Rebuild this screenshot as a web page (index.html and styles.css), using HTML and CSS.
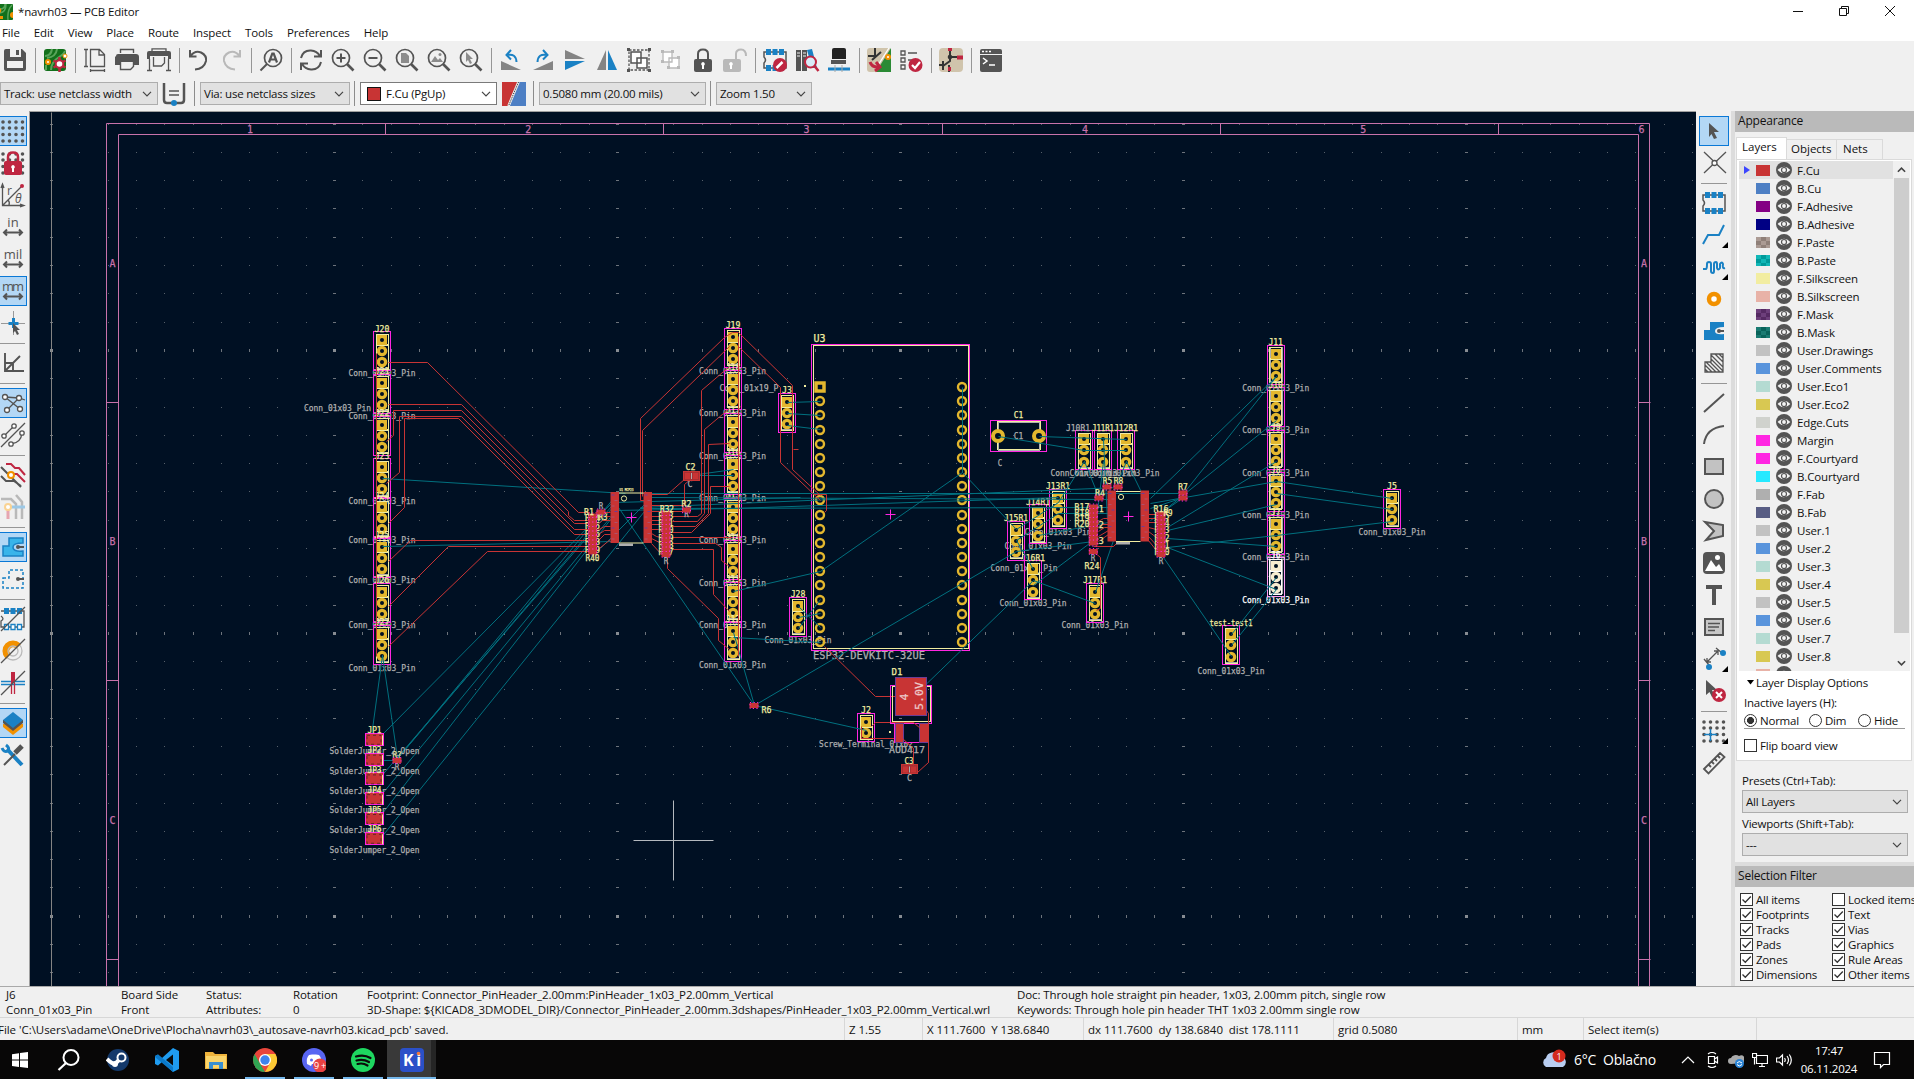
FILE: index.html
```html
<!DOCTYPE html>
<html lang="en">
<head>
<meta charset="utf-8">
<title>*navrh03 — PCB Editor</title>
<link rel="stylesheet" href="styles.css">
</head>
<body>
<svg class="sprite" aria-hidden="true">
  <symbol id="eye" viewBox="0 0 16 16"><circle cx="8" cy="8" r="8" fill="#545454"/><path d="M1.600 8Q8 1.600 14.400 8Q8 14.400 1.600 8Z" fill="#f4f4f4"/><circle cx="8" cy="8" r="2.500" fill="#f4f4f4" stroke="#545454" stroke-width="1.200"/></symbol>
  <symbol id="down" viewBox="0 0 10 6"><path d="M1 .8L5 4.800L9 .8" fill="none" stroke="#444" stroke-width="1.200"/></symbol>
  <symbol id="lens" viewBox="0 0 24 24"><circle cx="10" cy="10" r="8.500" fill="none" stroke="#545454" stroke-width="1.700"/><path d="M16 16L22.500 22.500" stroke="#545454" stroke-width="2.600"/></symbol>
  <symbol id="chip" viewBox="0 0 24 24"><path d="M1 4H23V20H1V15Q4 12 1 9Z" fill="none" stroke="#545454" stroke-width="1.500"/><path d="M3 1h5v6H3zM9.500 1h5v6h-5zM16 1h5v6h-5zM3 17h5v6H3zM9.500 17h5v6h-5zM16 17h5v6h-5z" fill="#1a81c4" stroke="none"/></symbol>
  <symbol id="check" viewBox="0 0 13 13"><path d="M2.500 6.500L5.300 9.300L10.800 3.500" fill="none" stroke="#333" stroke-width="1.300"/></symbol>
</svg>

<header class="titlebar">
  <svg class="app-icon" viewBox="0 0 16 16"><rect x="-4" width="17" height="16" rx="1" fill="#12701b"/><path d="M0 5Q5 5 5 0M6 0Q6 8 0 9M12 1Q7 6 8 16" stroke="#58a55a" stroke-width="1.500" fill="none"/><path d="M0 4a3 3 0 010 5M0 12h3v3H0M13 8a3 3 0 000 6" fill="#f29100"/></svg>
  <span class="title">*navrh03 — PCB Editor</span>
  <div class="win-controls">
    <svg viewBox="0 0 12 12"><path d="M1 6.500H11"/></svg>
    <svg viewBox="0 0 12 12"><path d="M1.500 3.500h7v7h-7zM3.500 3.500v-2h7v7h-2"/></svg>
    <svg viewBox="0 0 12 12"><path d="M1 1L11 11M11 1L1 11"/></svg>
  </div>
</header>
<nav class="menubar"><span>File</span><span>Edit</span><span>View</span><span>Place</span><span>Route</span><span>Inspect</span><span>Tools</span><span>Preferences</span><span>Help</span></nav>

<div class="toolbar main">
  <b class="tb"><svg class="ic" viewBox="0 0 24 24"><path class="f" d="M1 3Q1 1 3 1H19L23 5V21Q23 23 21 23H3Q1 23 1 21Z"/><path fill="#f0f0f0" stroke="none" d="M7 1h11v8H7zM4 13h16v7H4z"/><path class="f" d="M13 2h3v5h-3z"/></svg></b><i class="sep"></i>
  <b class="tb"><svg class="ic" viewBox="0 0 24 24"><rect x="1" y="1" width="22" height="22" rx="3" fill="#12701b" stroke="none"/><path d="M2 8Q8 8 9 1M4 10Q13 9 14 1M8 22Q8 14 16 9Q21 6 22 3M3 22v-5" stroke="#58a55a"/><circle cx="5" cy="14" r="2" fill="#fff" stroke="#f29100"/><circle cx="22" cy="8" r="2" fill="#fff" stroke="#f29100" stroke-width="1"/><path d="M16.500 9v15M10.500 12.500l12 7M10.500 19.500l12-7" stroke="#bf2641" stroke-width="2.500"/><circle cx="16.500" cy="16" r="3.800" fill="#fff" stroke="#bf2641"/></svg></b><i class="sep"></i>
  <b class="tb"><svg class="ic thin" viewBox="0 0 24 24"><path d="M7.500 1.500h9l5 5v12h-14zM16 2v5h5M1 1.500h4M1 18.500h4M3 2v16M7.500 21v3M21.500 21v3M8 22.500h13"/></svg></b>
  <b class="tb"><svg class="ic" viewBox="0 0 24 24"><path class="f" d="M1 8Q1 6 3 6H21Q24 6 24 9V17H19V14H5V17H0V9Z"/><path d="M5.500 5V1.500h13V5M5.500 14v7.500h10l3-3V14" fill="none" stroke-width="1.400"/></svg></b>
  <b class="tb"><svg class="ic" viewBox="0 0 24 24"><path class="f" d="M0 5Q0 3 2 3H22Q24 3 24 5V11H21V8H3V11H0Z"/><path d="M5 3V.8h14V3M6.500 9v9h8l3-3V9M2.500 11v11M21.500 11v11M0 22.500h5M19 22.500h5" stroke-width="1.300"/></svg></b><i class="sep"></i>
  <b class="tb"><svg class="ic" viewBox="0 0 24 24"><path d="M3 2V8.500H9.500M3.500 8Q8 2 14 4.500Q20 7.500 19 13Q17 21 8 21.500"/></svg></b>
  <b class="tb"><svg class="ic pale" viewBox="0 0 24 24"><path d="M21 2V8.500H14.500M20.500 8Q16 2 10 4.500Q4 7.500 5 13Q7 21 16 21.500"/></svg></b><i class="sep"></i>
  <b class="tb"><svg class="ic" viewBox="0 0 24 24"><circle cx="14" cy="10" r="8.500" stroke-width="1.700"/><path d="M8 16L1.500 22.500"/><path d="M10 14.500L13.300 5.500H14.700L18 14.500M11 11.500h6" stroke-width="2.200"/></svg></b><i class="sep"></i>
  <b class="tb"><svg class="ic" viewBox="0 0 24 24"><path d="M2 10Q4 2 12 2.500Q18 3 21 8M22 2v6.500h-7M22 14Q20 22 12 21.500Q6 21 3 16M2 22v-6.500h7"/></svg></b>
  <b class="tb"><svg class="ic" viewBox="0 0 24 24"><use href="#lens"/><path d="M5.500 10h9M10 5.500v9"/></svg></b>
  <b class="tb"><svg class="ic" viewBox="0 0 24 24"><use href="#lens"/><path d="M5.500 10h9"/></svg></b>
  <b class="tb"><svg class="ic" viewBox="0 0 24 24"><use href="#lens"/><path fill="#8c8c8c" stroke="none" d="M6 5h5l3 3v7H6z"/></svg></b>
  <b class="tb"><svg class="ic" viewBox="0 0 24 24"><use href="#lens"/><path fill="#8c8c8c" stroke="none" d="M4 14l4-6 3 4 2-2 3 4z"/><circle cx="13" cy="6.500" r="1.500" fill="#8c8c8c" stroke="none"/></svg></b>
  <b class="tb"><svg class="ic" viewBox="0 0 24 24"><use href="#lens"/><path fill="#8c8c8c" stroke="none" d="M7 4l7 7h-3l2 4-2 1-2-4-2 2z"/></svg></b><i class="sep"></i>
  <b class="tb"><svg class="ic" viewBox="0 0 24 24"><path fill="#848484" stroke="none" d="M2 13V22H22Z"/><path class="b" d="M8 7Q17 5 17.500 14M12 2L7.500 7L12 11.500"/></svg></b>
  <b class="tb"><svg class="ic" viewBox="0 0 24 24"><path fill="#848484" stroke="none" d="M22 13V22H2Z"/><path class="b" d="M16 7Q7 5 6.500 14M12 2L16.500 7L12 11.500"/></svg></b>
  <b class="tb"><svg class="ic" viewBox="0 0 24 24"><path fill="#848484" stroke="none" d="M2 2V11H22Z"/><path fill="#1a81c4" stroke="none" d="M2 22V13H22Z"/></svg></b>
  <b class="tb"><svg class="ic" viewBox="0 0 24 24"><path fill="#848484" stroke="none" d="M2 22H11V2Z"/><path fill="#1a81c4" stroke="none" d="M22 22H13V2Z"/></svg></b>
  <b class="tb"><svg class="ic thin" viewBox="0 0 24 24"><path d="M2 2H22V22H2Z" stroke-dasharray="2.500 1.500"/><path class="f" d="M0 0h3v3H0zM21 0h3v3h-3zM0 21h3v3H0zM21 21h3v3h-3z"/><path fill="#fff" d="M4 4H14V15H4ZM10 10H20V20H10Z" stroke-width="1.500"/></svg></b>
  <b class="tb"><svg class="ic thin pale" viewBox="0 0 24 24"><path fill="#fff" d="M4 4H13V14H4ZM10 10H20V20H10Z"/><path fill="#b9b9b9" stroke="none" d="M2 2h3v3H2zM12 2h3v3h-3zM2 12h3v3H2zM18 8h3v3h-3zM18 18h3v3h-3zM8 18h3v3H8z"/></svg></b>
  <b class="tb"><svg class="ic" viewBox="0 0 24 24"><rect class="f" x="3" y="11" width="18" height="13" rx="2"/><path d="M7 12V6Q7 1.500 12 1.500Q17 1.500 17 6V12"/><path fill="#fff" stroke="none" d="M12 14a2 2 0 011 3.600V21h-2v-3.400A2 2 0 0112 14"/></svg></b>
  <b class="tb"><svg class="ic pale" viewBox="0 0 24 24"><rect x="0" y="11" width="18" height="13" rx="2" fill="#b9b9b9" stroke="none"/><path d="M13 12V6Q13 1.500 18 1.500Q23 1.500 23 8"/><path fill="#fff" stroke="none" d="M8 14a2 2 0 011 3.600V21H7v-3.400A2 2 0 018 14"/></svg></b><i class="sep"></i>
  <b class="tb"><svg class="ic" viewBox="0 0 24 24"><use href="#chip"/><circle cx="17" cy="17" r="7" fill="#bf2641" stroke="none"/><path d="M13.500 20l6-6" stroke="#fff" stroke-width="2.500"/></svg></b>
  <b class="tb"><svg class="ic" viewBox="0 0 24 24"><path class="f" d="M1 2h5v21H1zM7 2h5v21H7z"/><path fill="#1a81c4" stroke="none" d="M12 2l5-1 5 19h-5z"/><path d="M2 5h3M2 8h3M8 5h3M8 8h3" stroke="#f0f0f0" stroke-width="1"/><circle cx="15.500" cy="14" r="5.500" fill="#d8ecf8" stroke="#bf2641"/><path d="M19.500 18l4 5" stroke="#bf2641" stroke-width="2.500"/></svg></b>
  <b class="tb"><svg class="ic" viewBox="0 0 24 24"><path fill="#222" stroke="none" d="M5 2Q5 0 7 0H17Q19 0 19 2V11H5Z"/><path class="f" d="M4 12h15v4H4z"/><path class="b" d="M1 21H23" stroke-width="3"/><path d="M8 17v7M15 17v7" stroke="#aaa" stroke-width="1"/></svg></b><i class="sep"></i>
  <b class="tb"><svg class="ic" viewBox="0 0 24 24"><rect width="24" height="24" rx="3" fill="#d0c4ac" stroke="none"/><path d="M24 0L9 24H24Z" fill="#2a8a34" stroke="none"/><path d="M1 8H9M8 0V10M5 12L14 4" stroke="#333"/><path d="M22 0L8 22" stroke="#fff" stroke-width="1.300"/><path d="M3 14Q5 20 13 19M9 14l4 5-5 4" stroke="#bf2641" stroke-width="3"/><circle cx="21" cy="9" r="2" fill="#fff" stroke="#f29100"/></svg></b>
  <b class="tb"><svg class="ic thin" viewBox="0 0 24 24"><path d="M2 3h4v4H2zM2 10h4v4H2zM2 17h4v4H2zM9 5h9M9 12h5"/><circle cx="16.500" cy="17" r="7" fill="#bf2641" stroke="none"/><path d="M13 17l3 3 5-6" stroke="#fff" stroke-width="2.200"/></svg></b><i class="sep"></i>
  <b class="tb"><svg class="ic" viewBox="0 0 24 24"><rect width="24" height="24" rx="4" fill="#d0c4ac" stroke="none"/><path d="M11 2V9H20M11 9V13L4 18M4 13V22M0 17H4M10 17V24" stroke="#333"/><circle cx="11" cy="9" r="2.300" fill="#333" stroke="none"/><path d="M11 0V3M18 9.500H24M9 21h3" stroke="#bf2641" stroke-width="4"/></svg></b><i class="sep"></i>
  <b class="tb"><svg class="ic" viewBox="0 0 24 24"><rect class="f" x="1" y="1" width="22" height="23" rx="2"/><path d="M1 6.500H23" stroke="#f0f0f0" stroke-width="1"/><path d="M3 3.500h2M6.500 3.500h2M10 3.500h2M4 10l4 3-4 3M10 17h6" stroke="#fff" stroke-width="1.500"/></svg></b>
</div>

<div class="toolbar options">
  <div class="combo w-track"><span>Track: use netclass width</span><svg class="dn"><use href="#down"/></svg></div>
  <b class="opt-icon"><svg class="ic" viewBox="0 0 24 24"><path d="M2 1V18Q2 21 5 21H19Q22 21 22 18V1" stroke-width="2.500"/><path d="M7 9h10M7 13h10" stroke-width="1.300"/><circle cx="12" cy="21" r="3" fill="#1a81c4" stroke="none"/></svg></b>
  <i class="vsep"></i>
  <div class="combo w-via"><span>Via: use netclass sizes</span><svg class="dn"><use href="#down"/></svg></div>
  <i class="vsep"></i>
  <div class="combo w-layer"><em class="sw"></em><span>F.Cu (PgUp)</span><svg class="dn"><use href="#down"/></svg></div>
  <svg class="pair" viewBox="0 0 24 24"><path d="M0 0H16L6 24H0Z" fill="#c83434"/><path d="M17 0H24V24H7Z" fill="#4d7fc4"/><path d="M16.500 0L6.500 24" stroke="#f0f0f0" stroke-width="2.600"/><path d="M16.500 0L6.500 24" stroke="#222" stroke-dasharray="1 1"/></svg>
  <i class="vsep"></i>
  <div class="combo w-grid"><span>0.5080 mm (20.00 mils)</span><svg class="dn"><use href="#down"/></svg></div>
  <i class="vsep"></i>
  <div class="combo w-zoom"><span>Zoom 1.50</span><svg class="dn"><use href="#down"/></svg></div>
</div>

<main class="workspace">
  <aside class="tools left">
    <b class="vb on"><svg class="ic" viewBox="0 0 24 24"><path class="dots" d="M2 3H24M2 9H24M2 15.500H24M2 22H24"/></svg></b>
    <b class="vb"><svg class="ic" viewBox="0 0 24 24"><path class="dots" d="M2 3H24M2 9H24M2 15.500H24M2 22H24"/><rect x="3" y="10" width="18" height="14" rx="2" fill="#bf2641" stroke="none"/><path d="M7 11V6Q7 1.500 12 1.500Q17 1.500 17 6V11" stroke="#bf2641" stroke-width="2.500"/><path fill="#fff" stroke="none" d="M12 14a2 2 0 011 3.600V21h-2v-3.400A2 2 0 0112 14"/></svg></b>
    <b class="vb"><svg class="ic thin" viewBox="0 0 24 24"><path d="M1.500 2V22.500H22M0 5l1.500-4L3 5M19 21l4 1.500L19 24M2 22L20 4M7 17q2 2 1 5"/><circle cx="21" cy="3" r="2" fill="#bf2641" stroke="none"/><text x="6" y="12" font-size="12">r</text><text x="14" y="20" font-size="12" font-style="italic">θ</text></svg></b>
    <b class="vb"><svg class="ic" viewBox="0 0 24 24"><text x="12" y="12" font-size="13" text-anchor="middle">in</text><path d="M3 17.500H21M6 14.500L3 17.500L6 20.500M18 14.500L21 17.500L18 20.500"/></svg></b>
    <b class="vb"><svg class="ic" viewBox="0 0 24 24"><text x="12" y="12" font-size="13" text-anchor="middle">mil</text><path d="M3 17.500H21M6 14.500L3 17.500L6 20.500M18 14.500L21 17.500L18 20.500"/></svg></b>
    <b class="vb on"><svg class="ic" viewBox="0 0 24 24"><text x="12" y="12" font-size="13" text-anchor="middle" textLength="22">mm</text><path d="M3 17.500H21M6 14.500L3 17.500L6 20.500M18 14.500L21 17.500L18 20.500"/></svg></b>
    <b class="vb"><svg class="ic" viewBox="0 0 24 24"><path d="M12.500 0V24M0 12.500H24" stroke="#999" stroke-width="1"/><path class="b" d="M12.500 7V17M7.500 12.500h10" stroke-width="3"/><path class="f" d="M12 12l7 7h-3l2 4-2 1-2-4-2 2z"/></svg></b>
    <i class="hsep"></i>
    <b class="vb"><svg class="ic" viewBox="0 0 24 24"><path d="M4 2V20H23M4 20L19 5M4 12h8v8" stroke-width="1.900"/></svg></b>
    <i class="hsep"></i>
    <b class="vb on"><svg class="ic thin" viewBox="0 0 24 24"><path d="M4 6L18 7L24 9M4 6L19 18M18 7L6 19"/><g fill="#fff"><circle cx="4" cy="6" r="2.500"/><circle cx="18" cy="7" r="2.500"/><circle cx="19" cy="18" r="2.500"/><circle cx="6" cy="19" r="2.500"/></g></svg></b>
    <b class="vb"><svg class="ic thin" viewBox="0 0 24 24"><path d="M0 24L24 0M3 13L13 3M10 21Q20 20 21 10"/><g fill="#fff"><circle cx="3" cy="13" r="2.200"/><circle cx="13" cy="3" r="2.200"/><circle cx="10" cy="21" r="2.200"/><circle cx="21" cy="10" r="2.200"/></g></svg></b>
    <i class="hsep"></i>
    <b class="vb"><svg class="ic" viewBox="0 0 24 24"><path d="M0 4L9 13L13 17L20 24M0 13L5 18H13L20 23"/><path d="M5 1H10L14 5H18L24 12M10 11H16L24 19" stroke="#bf2641"/><circle cx="10" cy="12" r="3" fill="#fff" stroke="#f29100"/></svg></b>
    <b class="vb"><svg class="ic pale" viewBox="0 0 24 24"><path d="M0 4H10L15 9V24M15 0L21 7V24" stroke-width="2.500"/><path d="M5 12H24" stroke="#9cc8e6" stroke-width="3"/><path d="M7 14V24" stroke="#e6a5b0" stroke-width="3"/><circle cx="7" cy="12" r="3" fill="#fff" stroke="#fad393"/></svg></b>
    <i class="hsep"></i>
    <b class="vb on"><svg class="ic" viewBox="0 0 24 24"><path d="M2 11H8V3H22V8Q12 8 12 12Q12 17 22 16V21H2Z" fill="#39b4ea" stroke="#1a81c4" stroke-width="1.500"/><circle cx="17" cy="12" r="2" class="f"/><path d="M17 12h6"/></svg></b>
    <b class="vb"><svg class="ic" viewBox="0 0 24 24"><path class="b" d="M2 11H8V3H22V21H2Z" stroke-width="1.500" stroke-dasharray="3 2"/><circle cx="17" cy="12" r="2" class="f"/><path d="M17 12h6"/></svg></b>
    <i class="hsep"></i>
    <b class="vb"><svg class="ic thin" viewBox="0 0 24 24"><path d="M0 4H23V20H0V14Q4 12 0 9"/><path d="M3 1h5v6H3zM9.500 1h5v6h-5zM16 1h5v6h-5z" fill="#1a81c4" stroke="none"/><path class="b" fill="#fff" d="M3.500 17.500h4v5h-4zM10 17.500h4v5h-4zM16.500 17.500h4v5h-4z"/><path d="M0 24L24 0"/></svg></b>
    <b class="vb"><svg class="ic thin" viewBox="0 0 24 24"><circle cx="12" cy="12" r="9" stroke="#bbb"/><path d="M5 19A9.500 9.500 0 0119 5L15 9A4 4 0 009 15Z" fill="#f29100" stroke="#f29100"/><circle cx="12" cy="12" r="5" stroke="#bbb"/><path d="M0 24L24 0"/></svg></b>
    <b class="vb"><svg class="ic thin" viewBox="0 0 24 24"><path class="b" d="M0 10.500H24M12 13.500H24M0 13.500h12"/><path d="M10.500 12V23M13.500 12V23" stroke="#bf2641"/><path d="M12 1V12" stroke="#bf2641" stroke-width="4"/><path d="M0 24L24 0"/></svg></b>
    <i class="hsep"></i>
    <b class="vb on"><svg class="ic" viewBox="0 0 24 24"><path d="M2 16L12 24L22 16V13H2Z" fill="#f29100" stroke="none"/><path class="f" d="M2 12L12 20L22 12V9H2Z"/><path d="M2 9L12 1L22 9L12 17Z" fill="#1a81c4" stroke="none"/></svg></b>
    <b class="vb"><svg class="ic" viewBox="0 0 24 24"><path class="b" d="M6 6L21 22" stroke-width="4"/><path class="b" d="M1 5Q3 10 7 8Q9 5 5 2" stroke-width="3"/><path d="M3 22L14 11" stroke-width="2"/><path d="M14 10L21 3" stroke-width="5"/></svg></b>
  </aside>

  <svg id="board" class="board" viewBox="30 112 1666 874" width="1666" height="874"></svg>

  <aside class="tools right">
    <b class="vb on"><svg class="ic" viewBox="0 0 24 24"><path class="f" d="M7 4l10 9h-5l3 6-3 1-2.500-5-2.500 3z"/></svg></b>
    <b class="vb"><svg class="ic thin" viewBox="0 0 24 24"><path d="M2 1L24 22M24 1L2 22"/><circle cx="12.500" cy="12" r="2.500" fill="#fff"/></svg></b>
    <i class="hsep"></i>
    <b class="vb"><svg class="ic" viewBox="0 0 24 24"><use href="#chip"/></svg></b>
    <b class="vb more"><svg class="ic" viewBox="0 0 24 24"><path class="b" d="M1 21L6 12H17L22 2"/></svg></b>
    <b class="vb more"><svg class="ic" viewBox="0 0 24 24"><path class="b" d="M1 14H4Q5 14 5 9Q5 7 7 7Q9 7 9 9V16Q9 18 11 18Q12 18 12 16V9Q12 7 14 7Q15 7 15 9V13Q16 16 18 13V9Q20 6 21 9Q20 14 23 13"/></svg></b>
    <b class="vb"><svg class="ic" viewBox="0 0 24 24"><circle cx="12" cy="12" r="5" fill="#fff" stroke="#f29100" stroke-width="4.500"/></svg></b>
    <b class="vb"><svg class="ic" viewBox="0 0 24 24"><path d="M2 11H8V3H22V8Q13 8 13 12Q13 16 22 15V21H2Z" fill="#1a81c4" stroke="none"/><circle cx="17" cy="12" r="2" class="f"/><path d="M17 12h5"/></svg></b>
    <b class="vb"><svg class="ic thin" viewBox="0 0 24 24"><path d="M3 11H9V3H21V21H3ZM9 4L21 16M13 3L21 11M17 3L21 7M9 8L21 20M8 11L18 21M4 11L14 21M3 14L10 21M3 18L6 21"/></svg></b>
    <i class="hsep"></i>
    <b class="vb"><svg class="ic" viewBox="0 0 24 24"><path d="M2 21L22 3"/></svg></b>
    <b class="vb"><svg class="ic" viewBox="0 0 24 24"><path d="M2 21Q4 5 22 3"/></svg></b>
    <b class="vb"><svg class="ic" viewBox="0 0 24 24"><rect x="3" y="4" width="18" height="15" fill="#c2c2c2"/></svg></b>
    <b class="vb"><svg class="ic" viewBox="0 0 24 24"><circle cx="12" cy="12" r="9" fill="#c2c2c2"/></svg></b>
    <b class="vb"><svg class="ic" viewBox="0 0 24 24"><path d="M3 3L21 6V17L4 21L12 12Z" fill="#c2c2c2"/></svg></b>
    <b class="vb"><svg class="ic" viewBox="0 0 24 24"><rect class="f" x="1" y="1" width="22" height="22" rx="4"/><path fill="#fff" stroke="none" d="M3 20L9 9L14 16L17 13L21 20Z"/><circle cx="15.500" cy="6.500" r="2.500" fill="#fff" stroke="none"/></svg></b>
    <b class="vb"><svg class="ic" viewBox="0 0 24 24"><path d="M4 4H20M12 4V22" stroke-width="4"/></svg></b>
    <b class="vb"><svg class="ic" viewBox="0 0 24 24"><rect x="3" y="4" width="18" height="16" fill="#c8c8c8"/><path d="M6 8.500H18M6 12H17M6 15.500H13" stroke-width="1.300"/></svg></b>
    <b class="vb more"><svg class="ic thin" viewBox="0 0 24 24"><path d="M5 15L16 4M5 11v4h4M12 4h4v4M2 12L7 18M14 1L20 6"/><g fill="#1a81c4" stroke="none"><circle cx="21" cy="6" r="3"/><circle cx="7" cy="20" r="3"/></g></svg></b>
    <b class="vb"><svg class="ic" viewBox="0 0 24 24"><path class="f" d="M4 1l11 10h-5l3 6-3 1-2.500-5-3.500 3z"/><circle cx="17" cy="16" r="7" fill="#bf2641" stroke="none"/><path d="M14 13l6 6M20 13l-6 6" stroke="#fff"/></svg></b>
    <i class="hsep"></i>
    <b class="vb more"><svg class="ic" viewBox="0 0 24 24"><path class="dots" d="M2 3H24M2 9H24M2 15.500H24M2 22H24"/><path class="b" d="M8.500 10V22M2 15.500H15" stroke-width="1.500"/></svg></b>
    <b class="vb"><svg class="ic" viewBox="0 0 24 24"><path d="M2 18L18 2L22.500 6L6.500 22.500ZM7 14l2 2M10 11l2 2M13 8l2 2M16 5l2 2" stroke-width="1.800"/></svg></b>
  </aside>

  <section class="panel">
    <h2>Appearance</h2>
    <div class="tabs"><span class="tab active">Layers</span><span class="tab">Objects</span><span class="tab">Nets</span></div>
    <div class="page">
      <div class="list-wrap">
        <ul class="layers" id="layers"></ul>
        <div class="scroll"><svg viewBox="0 0 10 6"><path d="M1 5L5 1L9 5"/></svg><span class="thumb"></span><svg viewBox="0 0 10 6"><path d="M1 1L5 5L9 1"/></svg></div>
      </div>
      <div class="display">
        <div class="disc"><svg viewBox="0 0 7 5"><path d="M0 0H7L3.500 4.500Z"/></svg>Layer Display Options</div>
        <div class="inactive">Inactive layers (H):</div>
        <div class="radios"><label class="r1"><i class="radio sel"></i>Normal</label><label class="r2"><i class="radio"></i>Dim</label><label><i class="radio"></i>Hide</label></div>
        <label class="flip"><i class="cb"></i>Flip board view</label>
      </div>
    </div>
    <div class="presets">
      <p>Presets (Ctrl+Tab):</p>
      <div class="combo"><span>All Layers</span><svg class="dn"><use href="#down"/></svg></div>
      <p>Viewports (Shift+Tab):</p>
      <div class="combo"><span>---</span><svg class="dn"><use href="#down"/></svg></div>
    </div>
    <h2 class="filter-head">Selection Filter</h2>
    <div class="filter">
      <label><i class="cb"><svg><use href="#check"/></svg></i>All items</label><label><i class="cb"></i>Locked items</label>
      <label><i class="cb"><svg><use href="#check"/></svg></i>Footprints</label><label><i class="cb"><svg><use href="#check"/></svg></i>Text</label>
      <label><i class="cb"><svg><use href="#check"/></svg></i>Tracks</label><label><i class="cb"><svg><use href="#check"/></svg></i>Vias</label>
      <label><i class="cb"><svg><use href="#check"/></svg></i>Pads</label><label><i class="cb"><svg><use href="#check"/></svg></i>Graphics</label>
      <label><i class="cb"><svg><use href="#check"/></svg></i>Zones</label><label><i class="cb"><svg><use href="#check"/></svg></i>Rule Areas</label>
      <label><i class="cb"><svg><use href="#check"/></svg></i>Dimensions</label><label><i class="cb"><svg><use href="#check"/></svg></i>Other items</label>
    </div>
  </section>
</main>

<div class="messages">
  <div>J6<br>Conn_01x03_Pin</div><div>Board Side<br>Front</div><div>Status:<br>Attributes:</div><div>Rotation<br>0</div>
  <div>Footprint: Connector_PinHeader_2.00mm:PinHeader_1x03_P2.00mm_Vertical<br>3D-Shape: ${KICAD8_3DMODEL_DIR}/Connector_PinHeader_2.00mm.3dshapes/PinHeader_1x03_P2.00mm_Vertical.wrl</div>
  <div>Doc: Through hole straight pin header, 1x03, 2.00mm pitch, single row<br>Keywords: Through hole pin header THT 1x03 2.00mm single row</div>
</div>
<footer class="status"><span class="file">File 'C:\Users\adame\OneDrive\Plocha\navrh03\_autosave-navrh03.kicad_pcb' saved.</span><span>Z 1.55</span><span>X 111.7600&nbsp; Y 138.6840</span><span>dx 111.7600&nbsp; dy 138.6840&nbsp; dist 178.1111</span><span>grid 0.5080</span><span>mm</span><span>Select item(s)</span><span></span></footer>

<div class="taskbar">
  <div class="apps">
    <b><svg viewBox="0 0 24 24"><path fill="#fff" d="M4 6.200L11 5.200V11.500H4ZM12 5L20 4V11.500H12ZM4 12.500H11V19L4 18ZM12 12.500H20V20L12 19.100Z"/></svg></b>
    <b><svg viewBox="0 0 24 24"><circle cx="14" cy="9.500" r="7.500" fill="none" stroke="#fff" stroke-width="2"/><path d="M9 15L1.500 22" stroke="#fff" stroke-width="2.200"/></svg></b>
    <b><svg viewBox="0 0 24 24"><circle cx="12" cy="12" r="11" fill="#14396b"/><path d="M1 11Q6 16 9 16L15 10" stroke="#fff" stroke-width="4" fill="none"/><circle cx="15.500" cy="9.500" r="4" fill="#14396b" stroke="#fff" stroke-width="2"/><circle cx="9" cy="16" r="3" fill="#fff"/></svg></b>
    <b><svg viewBox="0 0 24 24"><path d="M18 0L24 3V21L18 24L7 14L3 17.500L0 16V8L3 6.500L7 10Z" fill="#1f9cf0"/><path d="M18 6.500V17.500L11 12Z" fill="#0b0b0b"/><path d="M0 8L3 6.500L18 19V24L0 9Z" fill="#0b79c9"/></svg></b>
    <b><svg viewBox="0 0 24 24"><path d="M1 4H9L11 6H23V21H1Z" fill="#f0b43c"/><path d="M2 8H22V20H2Z" fill="#fbd56b"/><path d="M5 21V14H19V21H15V17H9V21Z" fill="#3a8fd0"/></svg></b>
    <b class="run"><svg viewBox="0 0 24 24"><circle cx="12" cy="12" r="12" fill="#e9453a"/><path d="M1.600 6L7 15.500L12 24A12 12 0 010 12Q0 9 1.600 6" fill="#30a552"/><path d="M12 24A12 12 0 0022.400 6H12L17 15Z" fill="#fcc934"/><circle cx="12" cy="12" r="6" fill="#fff"/><circle cx="12" cy="12" r="4.700" fill="#3f83ee"/></svg></b>
    <b class="run"><svg viewBox="0 0 24 24"><circle cx="12" cy="12" r="12" fill="#5865f2"/><path fill="#fff" d="M5 16Q4 10 7 7L10 6.500H14L17 7Q20 10 19 16L15 18L14 16H10L9 18Z"/><circle cx="9.500" cy="12" r="1.500" fill="#5865f2"/><circle cx="18" cy="17.500" r="7" fill="#e84142"/><text x="12" y="21" font-size="9" fill="#fff" textLength="12">9+</text></svg></b>
    <b class="run"><svg viewBox="0 0 24 24"><circle cx="12" cy="12" r="12" fill="#1ed760"/><path d="M5 8.500Q13 6 19.500 10M5.500 12.500Q12 10.500 18 14M6.500 16Q12 14.500 16.500 17.500" fill="none" stroke="#0b0b0b" stroke-width="2.200" stroke-linecap="round"/></svg></b>
    <b class="run cur"><svg viewBox="0 0 24 24"><rect width="24" height="24" rx="4" fill="#2b50c8"/><text x="3" y="18" font-size="16" font-weight="700" fill="#fff" textLength="18">Ki</text><circle cx="18.500" cy="5.500" r="1.800" fill="#f27a3a"/></svg></b>
  </div>
  <div class="weather"><svg viewBox="0 0 26 22"><path d="M5 18a5 5 0 010-9 7 7 0 0113-2 6 6 0 014 11z" fill="#b9cdf0"/><circle cx="18" cy="7" r="6.500" fill="#d42a1e"/><text x="18" y="10.500" font-size="9" fill="#fff" text-anchor="middle">1</text></svg><span>6°C&nbsp; Oblačno</span></div>
  <div class="tray">
    <svg viewBox="0 0 16 16"><path d="M2 11L8 5L14 11"/></svg>
    <svg viewBox="0 0 16 16"><path d="M4.500 4.500h6v7h-6zM10.500 7l3-2v6l-3-2M4 2Q8-1 12 2M4 14Q8 17 12 14"/></svg>
    <svg viewBox="0 0 16 16"><path d="M3 12a3 3 0 010-6 5 4 0 018-2 4 4 0 014 7z" fill="#aaa" stroke="none"/><circle cx="11.500" cy="11.500" r="4.500" fill="#2a84d6" stroke="none"/><path d="M9 11q2-3 5 0M9 12.500q2 3 5 0" stroke-width="1"/></svg>
    <svg viewBox="0 0 16 16"><path d="M4.500 3.500h11v8h-11zM10 11.500v3M7 14.500h6M.5 1.500h4v4h-4zM2.500 5.500v7"/></svg>
    <svg viewBox="0 0 16 16"><path d="M.5 6h3l3-3v10l-3-3h-3zM8.500 6q1.500 2 0 4M11 4q3 4 0 8M13.300 2.500q4 5.500 0 11"/></svg>
  </div>
  <div class="clock">17:47<br>06.11.2024</div>
  <svg class="note" viewBox="0 0 18 18"><path d="M1.500 1.500h15v12h-6l-3 3v-3h-6z" fill="none" stroke="#fff" stroke-width="1.200"/></svg>
</div>
<script src="script.js"></script>
</body>
</html>
```
FILE: styles.css
```css
* { box-sizing: border-box; }
body { margin: 0; width: 1914px; height: 1079px; overflow: hidden; display: flex; flex-direction: column; background: #f0f0f0; color: #111; font: 11.500px/15px "Open Sans", "Noto Sans", sans-serif; letter-spacing: -0.22px; }
.sprite { display: none; }
b, i, em { font-style: normal; font-weight: 400; }
svg { display: block; flex: none; }
h2, p, ul { margin: 0; padding: 0; font-size: inherit; font-weight: 400; list-style: none; }

.titlebar { height: 24px; background: #fff; display: flex; align-items: center; }
.app-icon { width: 16px; height: 16px; margin-top: -1px; }
.title { padding: 0 0 1px 2px; letter-spacing: -.17px; }
.win-controls { margin-left: auto; display: flex; gap: 34px; padding: 0 18px 3px 0; }
.win-controls svg { width: 12px; height: 12px; fill: none; stroke: #111; }
.menubar { height: 17px; background: #fff; display: flex; gap: 14px; padding-left: 2px; align-items: center; letter-spacing: -.12px; }

.toolbar { display: flex; align-items: center; flex: none; }
.main { height: 38px; margin-left: -1px; }
.tb { width: 32px; display: flex; justify-content: center; }
.ic { width: 24px; height: 24px; fill: none; stroke: #545454; stroke-width: 2; overflow: visible; }
.ic text { fill: #545454; stroke: none; letter-spacing: 0; }
.thin { stroke-width: 1.300; }
.pale { stroke: #b9b9b9; }
.f { fill: #545454; stroke: none; }
.b { stroke: #1a81c4; }
.dots { stroke-width: 3.600; stroke-linecap: round; stroke-dasharray: 0 6.500; }
.sep { width: 8px; height: 25px; background: linear-gradient(#969696, #969696) center / 1px 100% no-repeat; }
.options { height: 32px; padding-bottom: 3px; }
.vsep { width: 1px; height: 25px; background: #8c8c8c; margin: 0 5px 0 4px; }
.combo { height: 23px; border: 1px solid #adadad; background: #e1e1e1; display: flex; align-items: center; padding: 0 3px; }
.combo span { white-space: nowrap; }
.dn { width: 10px; height: 6px; margin: 0 2px 0 auto; }
.w-track { width: 158px; }
.opt-icon { width: 32px; display: flex; justify-content: center; }
.w-via { width: 150px; }
.w-layer { width: 137px; background: #fff; border-color: #7a7a7a; padding-left: 6px; }
.sw { width: 14px; height: 14px; border: 1px solid #111; background: #c83434; margin-right: 5px; }
.pair { width: 24px; height: 24px; margin: 0 3px 0 5px; }
.w-grid { width: 167px; }
.w-zoom { width: 96px; }

.workspace { display: flex; height: 876px; flex: none; border-bottom: 1px solid #a9a9a9; }
.tools { display: flex; flex-direction: column; padding-top: 5px; flex: none; }
.left { width: 30px; padding-left: 0; border-right: 1px solid #a0a0a0; }
.vb { height: 30px; margin-bottom: 2px; display: flex; align-items: center; justify-content: center; border: 1px solid transparent; }
.left .vb { width: 27px; padding-right: 1px; border-left: 0; justify-content: flex-end; }
.right .vb { width: 30px; margin-left: 3px; }
.vb.on { background: #b3d7f5; border-color: #0a78d6; }
.hsep { height: 8px; width: 25px; background: linear-gradient(#969696, #969696) center 3px / 100% 1px no-repeat; }
.right .hsep { width: 26px; margin-left: 5px; }
.right { width: 35px; }
.more { position: relative; }
.more::after { content: ""; position: absolute; right: 0; bottom: 1px; border: 3.500px solid #000; border-top-color: transparent; border-left-color: transparent; }
.board { background: #001023; border-top: 1px solid #a0a0a0; width: 1666px; height: 875px; font-family: "DejaVu Sans Mono", monospace; letter-spacing: 0; }

.panel { flex: 1; border-left: 4px solid #dcdcdc; display: flex; flex-direction: column; min-width: 0; }
h2 { height: 21px; line-height: 20px; background: #bababa; padding-left: 3px; font-size: 12px; letter-spacing: -.2px; }
.tabs { height: 27px; padding: 5px 0 0 1px; display: flex; align-items: flex-end; }
.tab { height: 20px; border: 1px solid #dadada; border-bottom: 0; border-left: 0; padding: 1px 4px 0; width: 50px; letter-spacing: 0; }
.tab:last-child { width: 46px; padding-left: 6px; }
.tab.active { height: 22px; background: #fff; width: 51px; border-left: 1px solid #dadada; padding-left: 5px; }
.page { margin: 0 2px 0 1px; height: 602px; background: #fff; border: 1px solid #dadada; padding: 1px 1px 0 2px; }
.list-wrap { height: 510px; display: flex; }
.layers { width: 155px; background: #f0f0f0; overflow: hidden; letter-spacing: -.15px; }
.layers li { height: 18px; display: flex; align-items: center; padding-left: 5px; }
.layers li.cur { background: #e1e1e1; }
.layers .arrow { width: 6px; height: 8px; margin-right: 6px; }
.layers .cur .arrow { background: #3c46ff; clip-path: polygon(0 0, 100% 50%, 0 100%); }
.layers .chip { width: 14px; height: 11px; margin-right: 6px; }
.chip.checker { background-image: conic-gradient(#0002 25%, #fff1 0 50%, #0002 0 75%, #fff1 0); background-size: 10px 8px; }
.layers svg { width: 16px; height: 16px; margin-right: 5px; }
.scroll { width: 17px; background: #f0f0f0; display: flex; flex-direction: column; align-items: center; padding: 6px 0 5px; }
.scroll svg { width: 9px; height: 6px; fill: none; stroke: #444; stroke-width: 1.800; }
.scroll .thumb { width: 15px; height: 455px; background: #cdcdcd; margin: 5px 0 auto; }
.display { padding: 2px 0 0 5px; }
.disc { display: flex; align-items: center; padding-left: 3px; gap: 2px; height: 18px; }
.disc svg { width: 7px; height: 5px; }
.inactive { margin-top: 4px; height: 15px; }
.radios { display: flex; margin-top: 2px; height: 17px; width: 161px; border-bottom: 1px solid #999; }
label { display: flex; align-items: center; gap: 3px; white-space: nowrap; }
.r1 { width: 65px; } .r2 { width: 49px; }
.radio { width: 13px; height: 13px; border: 1px solid #333; border-radius: 50%; background: #fff; }
.radio.sel { background: radial-gradient(#333 0 3.200px, #fff 3.800px); }
.cb { width: 13px; height: 13px; border: 1px solid #333; background: #fff; flex: none; }
.cb svg { width: 13px; height: 13px; margin: -1px; }
.flip { margin-top: 9px; }
.presets { height: 105px; padding: 12px 6px 0 7px; border-bottom: 4px solid #dcdcdc; flex: none; }
.presets p { height: 17px; }
.presets .combo { width: 166px; margin-bottom: 3px; }
.filter { display: grid; grid-template-columns: 92px 1fr; grid-auto-rows: 15px; padding: 5px 0 0 5px; overflow: hidden; }

.messages { height: 31px; flex: none; border-bottom: 1px solid #d7d7d7; display: grid; grid-template-columns: 115px 85px 87px 74px 650px 1fr; padding: 0 0 0 6px; white-space: nowrap; letter-spacing: -.1px; }
.status { height: 22px; flex: none; display: grid; grid-template-columns: 844px 78px 161px 250px 184px 66px 173px 1fr; line-height: 23px; white-space: nowrap; letter-spacing: -.04px; }
.status span { border-left: 1px solid #d7d7d7; padding-left: 4px; }
.status .file { border: 0; padding: 0; margin-left: -2px; }

.taskbar { height: 39px; flex: none; background: #080707; color: #fff; display: flex; align-items: center; }
.apps { display: flex; padding-left: 0; margin-left: -5px; height: 39px; }
.apps b { width: 49px; height: 39px; padding: 0 4px; position: relative; display: flex; align-items: center; justify-content: center; }
.apps svg { width: 24px; height: 24px; }
.run { background: linear-gradient(#76b9ed, #76b9ed) center bottom / 40px 2px no-repeat; }
.apps .cur { background: linear-gradient(#76b9ed, #76b9ed) center bottom / 100% 2px no-repeat, linear-gradient(90deg, #393939 44px, #252525 44px); }
.weather { margin-left: auto; display: flex; align-items: center; gap: 7px; font-size: 14px; width: 139px; white-space: nowrap; }
.weather svg { width: 26px; height: 22px; }
.tray { display: flex; gap: 8px; }
.tray svg { width: 16px; height: 16px; fill: none; stroke: #fff; stroke-width: 1.200; }
.clock { width: 74px; text-align: center; line-height: 18px; }
.note { width: 18px; height: 18px; margin: 0 23px 0 7px; }
```
FILE: script.js
```js
const layers = [
  ["F.Cu", "#c83434"], ["B.Cu", "#4d7fc4"], ["F.Adhesive", "#840084"], ["B.Adhesive", "#000084"],
  ["F.Paste", "#a5948c", 1], ["B.Paste", "#00b2b2", 1], ["F.Silkscreen", "#f2eda1"], ["B.Silkscreen", "#e8b2a7"],
  ["F.Mask", "#633172", 1], ["B.Mask", "#0a7268", 1], ["User.Drawings", "#c2c2c2"], ["User.Comments", "#5994dc"],
  ["User.Eco1", "#b4dbd2"], ["User.Eco2", "#d8c852"], ["Edge.Cuts", "#d0d2cd"], ["Margin", "#ff26e2"],
  ["F.Courtyard", "#ff26e2"], ["B.Courtyard", "#26e9ff"], ["F.Fab", "#afafaf"], ["B.Fab", "#585d84"],
  ["User.1", "#c2c2c2"], ["User.2", "#5994dc"], ["User.3", "#b4dbd2"], ["User.4", "#d8c852"],
  ["User.5", "#c2c2c2"], ["User.6", "#5994dc"], ["User.7", "#b4dbd2"], ["User.8", "#d8c852"], ["User.9", "#e8b2a7"]
];
document.getElementById("layers").innerHTML = layers.map(([name, color, checker], i) =>
  `<li class="${i ? "" : "cur"}"><i class="arrow"></i><i class="chip${checker ? " checker" : ""}" style="background-color:${color}"></i><svg><use href="#eye"/></svg>${name}</li>`).join("");

const C = { cu: "#c83434", silk: "#f2eda1", fab: "#afafaf", crt: "#ff26e2", rat: "#00707f", pad: "#e3b72e", bg: "#001023", frame: "#c872ab" };
const out = [];
const half = v => Math.floor(v) + 0.5;
const rect = (x, y, w, h, stroke, fill = "none") => out.push(`<rect x="${half(x)}" y="${half(y)}" width="${Math.round(w)}" height="${Math.round(h)}" stroke="${stroke}" fill="${fill}"/>`);
const fillRect = (x, y, w, h, fill) => out.push(`<rect x="${x}" y="${y}" width="${w}" height="${h}" fill="${fill}"/>`);
const line = (pts, color) => out.push(`<polyline points="${pts.map(([x, y]) => half(x) + "," + half(y)).join(" ")}" fill="none" stroke="${color}"/>`);
const text = (s, cx, cy, w, color, size = 8.8, extra = "") => out.push(`<text x="${cx - w / 2}" y="${cy + size * 0.36}" font-size="${size}" fill="${color}" stroke="${color}" stroke-width=".25" textLength="${w}" lengthAdjust="spacingAndGlyphs" ${extra}>${s}</text>`);

// Grid: every tenth row and column is emphasised.
for (let i = 0; i < 59; i++) for (let j = 0; j < 32; j++) {
  const x = Math.floor(51.6 + i * 28.29), y = Math.floor(124.1 + j * 28.29);
  const mx = i % 10 === 0, my = (j + 2) % 10 === 0;
  if (x > 1695 || y > 985) continue;
  if (mx && my) fillRect(x - 1, y - 1, 3, 3, "#878c92");
  else if (mx) fillRect(x - 1, y, 3, 1, "#6c737b");
  else if (my) fillRect(x, y - 1, 1, 3, "#6c737b");
  else fillRect(x, y, 1, 1, "#56606a");
}

// Sheet frame
line([[51, 112], [51, 986]], "#848484");
line([[106, 990], [106, 123], [1649, 123], [1649, 990]], C.frame);
line([[118, 990], [118, 134], [1638, 134], [1638, 990]], C.frame);
for (let i = 0; i < 6; i++) {
  if (i < 5) line([[385.5 + i * 278.3, 123], [385.5 + i * 278.3, 134]], C.frame);
  text(i + 1, 250 + i * 278.3, 129.5, 6, C.frame, 10);
}
["A", "B", "C"].forEach((s, i) => {
  const y = 263 + i * 278.5;
  for (const x of [106, 1638]) line([[x, y + 139], [x + 12, y + 139]], C.frame);
  text(s, 112.5, y, 6, C.frame, 10);
  text(s, 1644, y, 6, C.frame, 10);
});

// Pin headers: x centre, courtyard top, reference, value
const value = "Conn_01x03_Pin";
const headers = [];
[331.5, 374, 416, 458.5, 498.5, 538, 583, 625].forEach((y, i) => headers.push([382, y, "J2" + i]));
[328.3, 370.3, 413.3, 455.3, 498.3, 540.3, 582.3, 622.3].forEach((y, i) => headers.push([733, y, i ? "J1" + (9 - i) : "J19"]));
[345, 387.5, 430.3, 472.4, 515.3].forEach((y, i) => headers.push([1275.7, y, i ? "J" + (11 - i) : "J11"]));
headers.push([787, 393.3, "J3"], [798, 597.3, "J28"], [1392, 489.3, "J5"], [1231, 625.7, "test-test1"],
  [1095, 583.3, "J17R1"], [1033, 560.7, "J16R1"], [1016, 521, "J15R1"], [1038, 504.7, "J14R1"], [1058, 489.3, "J13R1"],
  [1084, 430.7, "J10R1"], [1103, 430.7, "J11R1"], [1126, 430.7, "J12R1"], [1275.7, 557.4, "J6"], [866, 713.3, "J2"]);

const values = [[382, 373.3], [337.5, 407.7], [382, 416.3], [382, 500.7], [382, 540.3], [382, 580], [382, 625], [382, 667.7],
  [732.5, 371], [732.5, 413.3], [732.5, 455.7], [732.5, 498], [732.5, 540.3], [732.5, 582.7], [732.5, 625], [732.5, 665],
  [1275.7, 388], [1275.7, 430.3], [1275.7, 472.7], [1275.7, 515], [1275.7, 557.3], [798, 640], [1392, 531.7], [1231, 670.7],
  [1095, 625.3], [1033, 602.7], [1024, 568.3], [1038, 546.3], [1058, 531.7], [1084, 472.7], [1103, 472.7], [1126, 472.7]];
values.forEach(([x, y]) => text(value, x, y, 67, C.fab));
text(value, 1275.7, 600, 67, "#fff");
text("Conn_01x19_P", 749, 388.3, 59, C.fab);
text("Screw_Terminal_01x02", 866, 744.3, 94, C.fab);

function header([x, top, ref]) {
  const n = ref === "J2" ? 2 : 3, h = n * 11 + 6, sel = ref === "J6";
  const pad = sel ? "#f8edd0" : C.pad, silk = sel ? "#fff" : C.silk;
  rect(x - 5.5, top + 2.5, 12, h - 5, C.fab);
  rect(x - 6, top + 2.5, 12, h - 4, silk);
  rect(x - 6, top + 13, 12, 1, silk);
  for (let i = 0; i < n; i++) {
    const cy = Math.round(top + 8.6 + i * 11.1), cx = Math.round(x);
    out.push(i ? `<circle cx="${cx}" cy="${cy}" r="5.3" fill="${pad}"/>` : `<rect x="${cx - 5}" y="${cy - 5}" width="10" height="10" fill="${pad}"/>`);
    out.push(`<circle cx="${cx}" cy="${cy}" r="2" fill="${C.bg}"/>`);
  }
  rect(x - 8.5, top, 17, h, sel ? "#ff9cf2" : C.crt);
  const w = ref.length > 5 ? 43 : ref.length > 4 ? 24 : ref.length * 4.7 + 0.5;
  text(ref, ref === "J10R1" ? x - 6 : x, top - 3, ref === "J11R1" ? 22 : w, ref === "J10R1" ? C.fab : silk);
}
headers.forEach(header);

// Module U3
text("U3", 819.5, 338, 12, C.silk, 10.5);
text("ESP32-DEVKITC-32UE", 869, 655.5, 112, C.fab, 10.5);
rect(811, 344, 158, 306, C.crt);
rect(813, 345, 155, 303, C.silk);
for (let i = 0; i < 19; i++) for (const x of [820, 962]) {
  const y = Math.round(387 + i * 14.17);
  out.push(i || x > 900 ? `<circle cx="${x}" cy="${y}" r="4" fill="none" stroke="${C.pad}" stroke-width="2.4"/>`
    : `<rect x="816" y="383" width="8" height="8" fill="none" stroke="${C.pad}" stroke-width="3.5"/>`);
}
const cross = (x, y, r, c) => { line([[x - r, y], [x + r, y]], c); line([[x, y - r], [x, y + r]], c); };
cross(890, 514, 5, C.crt);
fillRect(804, 385, 2, 2, C.silk);

// Capacitor C1
rect(990, 420, 56, 31, C.crt);
rect(997, 421, 43, 28, C.silk);
rect(998, 422, 41, 28, C.fab);
for (const x of [998, 1039]) out.push(`<circle cx="${x}" cy="436" r="5" fill="${C.bg}" stroke="${C.pad}" stroke-width="4"/>`);
text("C1", 1018.5, 415, 9.5, C.silk);
text("C1", 1018.5, 436, 9.5, C.fab);
text("C", 1000, 462.5, 4.5, C.fab);

// Ratsnest
const rats = [
  [382, 478, 625, 493], [382, 546, 612, 541], [380, 736, 614, 500], [398, 757, 614, 497], [398, 757, 616, 500], [380, 760, 396, 760],
  [378, 779, 614, 505], [378, 798, 614, 512], [378, 818, 614, 514], [380, 838, 648, 506], [618, 507, 754, 705], [733, 632, 754, 705],
  [754, 705, 1016, 551], [754, 705, 866, 730], [382, 655, 371, 736], [382, 655, 397, 757], [640, 493, 1183, 493], [650, 497, 1110, 499],
  [614, 502, 800, 497], [640, 508, 1110, 507], [640, 507, 1118, 487], [614, 510, 732, 508], [732, 508, 1058, 497], [787, 402, 820, 401],
  [787, 413, 820, 415], [787, 425, 820, 429], [690, 475, 733, 469], [690, 475, 733, 475], [962, 387, 962, 472], [962, 472, 820, 571],
  [820, 571, 733, 591], [962, 472, 1016, 529], [798, 606, 820, 627], [798, 617, 820, 613], [798, 628, 820, 599], [733, 637, 820, 642],
  [912, 697, 1033, 580], [1033, 585, 1093, 540], [1033, 580, 1095, 603], [1039, 436, 1126, 439], [998, 436, 1084, 450], [1084, 450, 1126, 450],
  [1084, 461, 1058, 502], [1084, 461, 1099, 498], [1103, 439, 1107, 520], [1103, 461, 1093, 545], [1126, 461, 1145, 500], [1126, 461, 1110, 500],
  [1180, 497, 1276, 376], [1160, 513, 1276, 420], [1167, 527, 1276, 461], [1150, 503, 1276, 481], [1167, 530, 1276, 504], [1167, 538, 1276, 546],
  [1167, 547, 1276, 535], [1276, 535, 1392, 521], [1276, 481, 1392, 498], [1276, 493, 1392, 509], [1167, 547, 1276, 589], [1163, 557, 1231, 656],
  [1276, 577, 1231, 634], [1276, 589, 1231, 645], [1095, 592, 1113, 540], [1058, 513, 1108, 513], [1038, 535, 1108, 522], [1016, 551, 1093, 541],
  [1016, 540, 1058, 513], [1016, 529, 1058, 502], [1033, 569, 1016, 540], [1150, 508, 1183, 497], [1150, 520, 1183, 497], [1150, 498, 1276, 376],
  [631, 517, 648, 500], [631, 517, 600, 548]
];
rats.forEach(([a, b, c, d]) => line([[a, b], [c, d]], C.rat));

// Copper tracks, stored per board area in local units
function tracks(ox, oy, sx, sy, list) {
  list.forEach(s => {
    const n = s.split(/[ ,]/).map(Number), p = [];
    for (let i = 0; i < n.length; i += 2) p.push([ox + n[i] / sx, oy + n[i + 1] / sy]);
    line(p, C.cu);
  });
}
tracks(290, 310, 2.958, 3, [
  "290,156 408,156 853,606 885,606", "290,284 508,284 823,603 823,615 843,630 885,630", "285,394 307,376 307,301 508,301 843,640 885,640",
  "285,520 324,488 324,320 508,320 843,657 885,657", "290,640 338,593 338,325 498,325 843,673 880,673", "290,755 355,691 885,691",
  "290,890 470,709 885,709", "290,1010 583,724 885,724", "256,130 256,1040", "1327,80 1327,1040",
  "1310,67 1286,82 1037,325 1037,570 1050,570", "1300,110 1042,360 1042,560", "1300,170 1218,241 1218,610 1205,618 1130,618",
  "1300,295 1227,358 1227,610 1205,633 1130,633", "1300,400 1237,403 1237,610 1200,648 1130,648", "1300,529 1245,529 1245,610 1187,667 1130,667",
  "1310,67 1328,67 1486,226 1486,478 1568,556", "1328,110 1451,233 1451,457 1568,570", "1070,552 1117,552 1170,505",
  "1070,586 1168,586 1168,523 1187,505", "1130,682 1310,682", "1130,700 1260,700 1277,712 1277,750 1300,770",
  "1130,718 1252,718 1252,853 1300,903", "1117,740 1117,776 1267,925 1267,990 1300,1018",
  "905,606 948,606", "905,625 930,618 948,618", "905,650 925,632 948,632", "905,665 930,648 948,648", "905,680 930,660 948,660",
  "905,700 930,673 948,673", "905,725 948,688", "1070,604 1160,604", "1070,618 1110,618", "1070,630 1110,630", "1070,642 1110,642",
  "1070,657 1090,657 1110,670", "1070,670 1085,680 1110,685", "1070,686 1110,705", "1070,700 1105,738"
]);
tracks(780, 310, 3, 3, [
  "100,552 139,552 139,600 133,606", "133,1008 286,1159 350,1159", "275,1250 286,1238 400,1238 420,1255", "243,1250 243,1285 345,1285",
  "440,1200 446,1210 446,1358 413,1388", "368,1285 401,1315 401,1365", "40,418 54,418"
]);
tracks(980, 390, 3, 3, [
  "340,468 400,468 415,455", "340,485 362,503 362,655 350,660", "355,410 368,402 385,402", "355,425 372,412 385,412", "355,440 385,420",
  "355,455 385,432", "355,395 370,385 385,385", "505,373 540,373", "505,385 540,385", "505,397 540,397", "505,412 540,420", "505,425 540,450",
  "505,440 540,478", "505,450 530,480"
]);

// Dual-row ICs
function ic(x, y, tag) {
  for (const dx of [-20.5, 12.5]) {
    fillRect(x + dx, y - 25.5, 8.5, 51, C.cu);
    for (let i = 0; i < 9; i++) fillRect(x + dx + (i % 2 ? 4 : 1), y - 23 + i * 5.5, 3, 1, i % 3 ? "#b0506a" : "#6c3c96");
  }
  fillRect(x - 12, y - 25, 24.5, 1, C.silk);
  fillRect(x - 12, y + 25, 24.5, 1, C.silk);
  out.push(`<circle cx="${x - 7}" cy="${y - 19}" r="2.6" fill="none" stroke="${C.silk}"/>`);
  fillRect(x - 12, y + 26, 14, 2.5, C.fab);
  if (tag) text(tag, x - 4.5, y - 28, 14, C.silk, 4);
  cross(x, y, 5, C.crt);
}
ic(631, 517.5, "U1 MCP23");
ic(1128, 516, "");

// Resistor stacks
function res(x, y) {
  fillRect(x - 4.5, y - 2.5, 9, 5, C.cu);
  out.push(`<rect x="${x - 4}" y="${y - 3}" width="8" height="6" fill="none" stroke="${C.crt}" stroke-dasharray="1.2 2.4"/>`);
}
function stack(x, y0, y1, refs, side) {
  refs.forEach((r, i) => text(r, x + side, y0 + 4 + i * (y1 - y0 - 8) / (refs.length - 1), 15, C.silk, 8.5));
  fillRect(x - 4, y0, 8, y1 - y0, C.cu);
  for (let y = y0 + 2; y < y1; y += 4.5) res(x, y);
}
stack(592.6, 514, 554, ["R34", "R35", "R36", "R38", "R39"], 0);
stack(666, 512, 556, ["R33", "R31", "R30", "R29", "R28", "R27"], 0);
stack(1093.3, 505, 545, ["R21", "R22", "R23"], 3);
stack(1161, 512, 556, ["R15", "R14", "R13", "R12", "R11", "R10"], 1);
["R17", "R18", "R19", "R20"].forEach((r, i) => text(r, 1082, 507 + i * 5.6, 15, C.silk));
[["R1", 589, 512, 10], ["R3", 603, 517, 9], ["R40", 592.5, 558, 14], ["R32", 667, 509, 14], ["R2", 686.5, 504, 10], ["C2", 690.5, 467, 10],
 ["R24", 1092, 566, 15], ["R16", 1161, 509, 15], ["R5", 1107.5, 481, 9.5], ["R8", 1118.5, 481, 9.5], ["R4", 1100, 492.5, 10],
 ["R9", 1168, 513, 9], ["R7", 1183, 486.5, 9.5], ["R?", 397, 755, 9], ["R6", 766.5, 710, 10], ["C3", 909, 760.5, 9], ["D1", 897, 672, 11]
].forEach(([s, x, y, w]) => text(s, x, y, w, C.silk));
[[601, 506], [666, 561], [686.5, 514], [1093, 558], [1161, 561], [397, 767]].forEach(([x, y]) => text("R", x, y, 4.5, C.fab));
text("C", 690, 484, 5, C.fab);
[[601, 512], [686.5, 510], [1093.3, 551.5], [1107, 487], [1118, 487], [1099, 498], [1183, 493], [1183, 498], [397, 760.5], [754, 705.5]].forEach(([x, y]) => res(x, y));
[[683, 471], [901, 764.5]].forEach(([x, y]) => { rect(x, y, 16, 9, C.cu, "#a82e32"); fillRect(x + 2, y + 2, 5, 6, C.cu); fillRect(x + 10, y + 2, 5, 6, C.cu); fillRect(x + 8, y + 2, 1, 6, C.fab); });
text("C", 909.5, 777.5, 5, C.fab);

// Regulator D1
rect(890, 685, 41, 38, C.crt);
rect(892, 686, 38, 35, C.silk);
rect(894, 723, 34, 19, C.crt);
fillRect(895, 724, 33, 18, C.bg);
rect(895, 677, 31, 38, "#6c3c96", C.cu);
rect(895, 723, 8, 19, "#6c3c96", C.cu);
rect(919, 723, 9, 19, "#6c3c96", C.cu);
tracks(780, 310, 3, 3, ["368,1285 401,1315 401,1365", "369,1238 400,1238 420,1255", "446,1210 446,1358"]);
text("4", 904, 697, 7, "#edc9c9", 11, 'transform="rotate(-90 904 697)"');
text("5.0V", 919, 696, 28, "#edc9c9", 11, 'transform="rotate(-90 919 696)"');
text("AOD417", 907, 750, 36, C.fab, 9.5);
fillRect(889, 731, 2, 2, C.silk);

// Solder jumpers
for (let i = 0; i < 6; i++) {
  const y = 733.3 + i * 19.8;
  text("SolderJumper_2_Open", 374.5, y + 17.5, 90, C.fab);
  rect(365, y, 18, 12, C.crt, C.cu);
  out.push(`<rect x="367" y="${y + 2}" width="14" height="9" fill="none" stroke="${C.bg}" stroke-dasharray="3 3" opacity=".5"/>`);
  fillRect(382, y + 2, 1, 10, C.silk);
}
for (let i = 0; i < 6; i++) text("JP" + (i + 1), 374.5, 730.3 + i * 19.8, 14, C.silk);

cross(673, 840, 40, "#b4b9be");
document.getElementById("board").innerHTML = out.join("");
```
